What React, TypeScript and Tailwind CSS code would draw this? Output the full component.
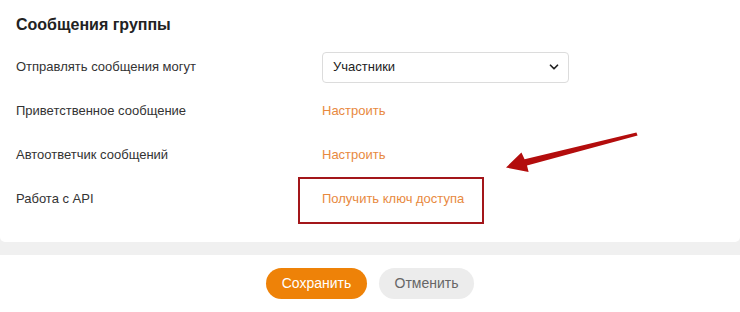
import { ChevronDown } from "lucide-react";

const rows = [
  { label: "Отправлять сообщения могут", kind: "select" },
  { label: "Приветственное сообщение", kind: "link", text: "Настроить" },
  { label: "Автоответчик сообщений", kind: "link", text: "Настроить" },
  { label: "Работа с API", kind: "link", text: "Получить ключ доступа" },
];

export default function App() {
  return (
    <div className="relative w-[740px] h-[312px] bg-white font-['Liberation_Sans',Arial,sans-serif] text-[#333]">
      <div className="bg-[#f0f0f0] pb-[13px]">
        <div className="bg-white rounded-b-[5px] px-4 pt-[14px] pb-[21px]">
          <h2 className="h-[22px] leading-[22px] mb-[9px] text-[16px] font-bold text-[#222]">Сообщения группы</h2>
          {rows.map((row) => (
            <div key={row.label} className="flex items-center h-[44px] text-[13px]">
              <div className="w-[306px]">{row.label}</div>
              {row.kind === "select" ? (
                <div className="flex items-center justify-between w-[247px] h-[31px] pl-[10px] pr-[7px] border border-[#dcdcdc] rounded-[4px] text-[13px] text-[#222]">
                  <span>Участники</span>
                  <ChevronDown className="w-[14px] h-[14px] text-[#222]" strokeWidth={3} />
                </div>
              ) : (
                <a className="text-[#e8893e] cursor-pointer">{row.text}</a>
              )}
            </div>
          ))}
        </div>
      </div>
      <div className="flex justify-center gap-3 pt-[13px]">
        <button className="w-[101px] h-[31px] rounded-full bg-[#ee8208] text-white text-[14px]">Сохранить</button>
        <button className="w-[95px] h-[31px] rounded-full bg-[#ececec] text-[#666] text-[14px]">Отменить</button>
      </div>

      {/* annotation overlay */}
      <div className="absolute left-[298px] top-[177px] w-[186px] h-[47px] border-2 border-[#a3161a]" />
      <svg className="absolute inset-0 pointer-events-none" width="740" height="312" viewBox="0 0 740 312">
        <polygon
          fill="#b30d0d"
          points="637.6,135.4 527,165.6 528.6,172 506,167.5 521.4,152.6 524.6,159.2 636.4,132.6"
        />
      </svg>
    </div>
  );
}
